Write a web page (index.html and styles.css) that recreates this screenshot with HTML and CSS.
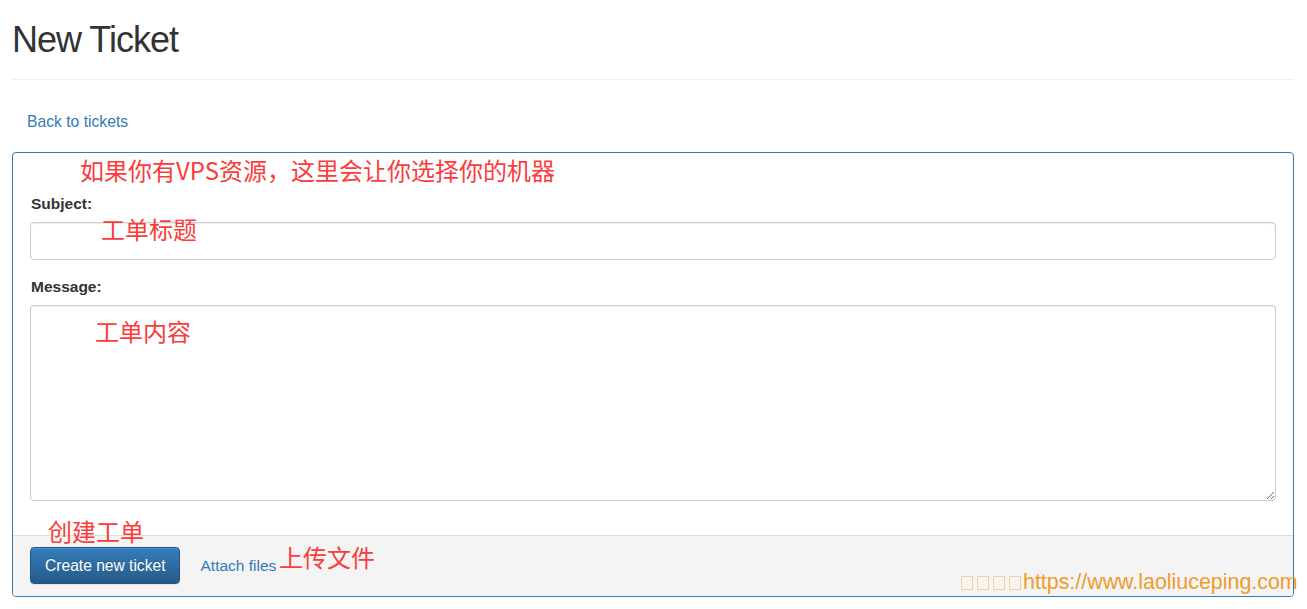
FILE: index.html
```html
<!DOCTYPE html>
<html lang="zh">
<head>
<meta charset="utf-8">
<title>New Ticket</title>
<link rel="stylesheet" href="styles.css">
</head>
<body>
<div class="container">
  <div class="page-header">
    <h1 class="title">New Ticket</h1>
  </div>
  <div class="back-row"><a class="link" href="#">Back to tickets</a></div>
  <form class="panel">
    <div class="panel-body">
      <div class="form-group">
        <label class="label" for="subject">Subject:</label>
        <input class="input" id="subject" type="text">
      </div>
      <div class="form-group last">
        <label class="label" for="message">Message:</label>
        <textarea class="textarea" id="message"></textarea>
      </div>
    </div>
    <div class="panel-footer">
      <button class="btn" type="button">Create new ticket</button>
      <a class="link attach" href="#">Attach files</a>
    </div>
    <span class="note note-vps">如果你有VPS资源，这里会让你选择你的机器</span>
    <span class="note note-subject">工单标题</span>
    <span class="note note-message">工单内容</span>
    <span class="note note-create">创建工单</span>
    <span class="note note-upload">上传文件</span>
  </form>
</div>
<div class="watermark"><span class="tofu"></span><span class="tofu"></span><span class="tofu"></span><span class="tofu"></span>https://www.laoliuceping.com</div>
</body>
</html>
```

FILE: styles.css
```css
* { box-sizing: border-box; }

html, body {
  margin: 0;
  padding: 0;
  background: #fff;
}

body {
  font-family: "Liberation Sans", Arial, sans-serif;
  font-size: 15.5px;
  line-height: 22px;
  color: #333;
  position: relative;
  width: 1307px;
  height: 609px;
  overflow: hidden;
}

.container {
  padding: 0 13px 0 12px;
}

.page-header {
  padding-bottom: 9px;
  border-bottom: 1px solid #eee;
}

.title {
  margin: 20px 0 10px 0;
  font-size: 36px;
  line-height: 40px;
  font-weight: 400;
  letter-spacing: -1px;
  color: #333;
}

.back-row {
  padding: 31px 0 0 15px;
  height: 72px;
  font-size: 15.7px;
}

.link {
  color: #337ab7;
  text-decoration: none;
}

.panel {
  position: relative;
  margin: 0;
  border: 1px solid #337ab7;
  border-radius: 4px;
  background: #fff;
}

.panel-body {
  padding: 40px 17px 34px 17px;
}

.form-group {
  margin-bottom: 16px;
}

.form-group.last {
  margin-bottom: 0;
}

.label {
  display: block;
  font-weight: 700;
  margin: 0 0 7px 1px;
  line-height: 22px;
}

.input,
.textarea {
  display: block;
  width: 100%;
  border: 1px solid #ccc;
  border-radius: 4px;
  box-shadow: inset 0 1px 1px rgba(0,0,0,.075);
  font: inherit;
  padding: 6px 12px;
  margin: 0;
  background: #fff;
}

.input { height: 38px; }

.textarea {
  height: 196px;
  resize: vertical;
}

.panel-footer {
  display: flex;
  align-items: center;
  padding: 11px 17px 12px 17px;
  background: #f4f4f4;
  border-top: 1px solid #ddd;
  border-radius: 0 0 3px 3px;
}

.btn {
  height: 37px;
  padding: 0 14px;
  font: inherit;
  font-size: 15.6px;
  color: #fff;
  background: linear-gradient(to bottom, #357dbb 0%, #265a88 100%);
  border: 1px solid #245580;
  border-radius: 4px;
  text-shadow: 0 -1px 0 rgba(0,0,0,.2);
  box-shadow: inset 0 1px 0 rgba(255,255,255,.15), 0 1px 1px rgba(0,0,0,.075);
}

.attach {
  margin-left: 20px;
  padding-top: 0;
}

.note {
  position: absolute;
  font-family: "Noto Sans CJK SC", "Liberation Sans", sans-serif;
  font-size: 24px;
  line-height: 1;
  color: #fa3c3c;
  white-space: nowrap;
}

.note-vps { top: 5px; left: 67px; }
.note-subject { top: 64px; left: 88px; }
.note-message { top: 166px; left: 82px; }
.note-create { top: 366px; left: 35px; }
.note-upload { top: 392px; left: 266px; }

.watermark {
  position: absolute;
  left: 959px;
  top: 572px;
  font-family: "Liberation Sans", Arial, sans-serif;
  font-size: 21.4px;
  line-height: 1;
  color: #ef9b2d;
  white-space: nowrap;
}

.tofu {
  display: inline-block;
  width: 12px;
  height: 14px;
  margin: 0 2px 0 2px;
  border: 1px solid #f6cf9d;
  vertical-align: -1px;
}
```
